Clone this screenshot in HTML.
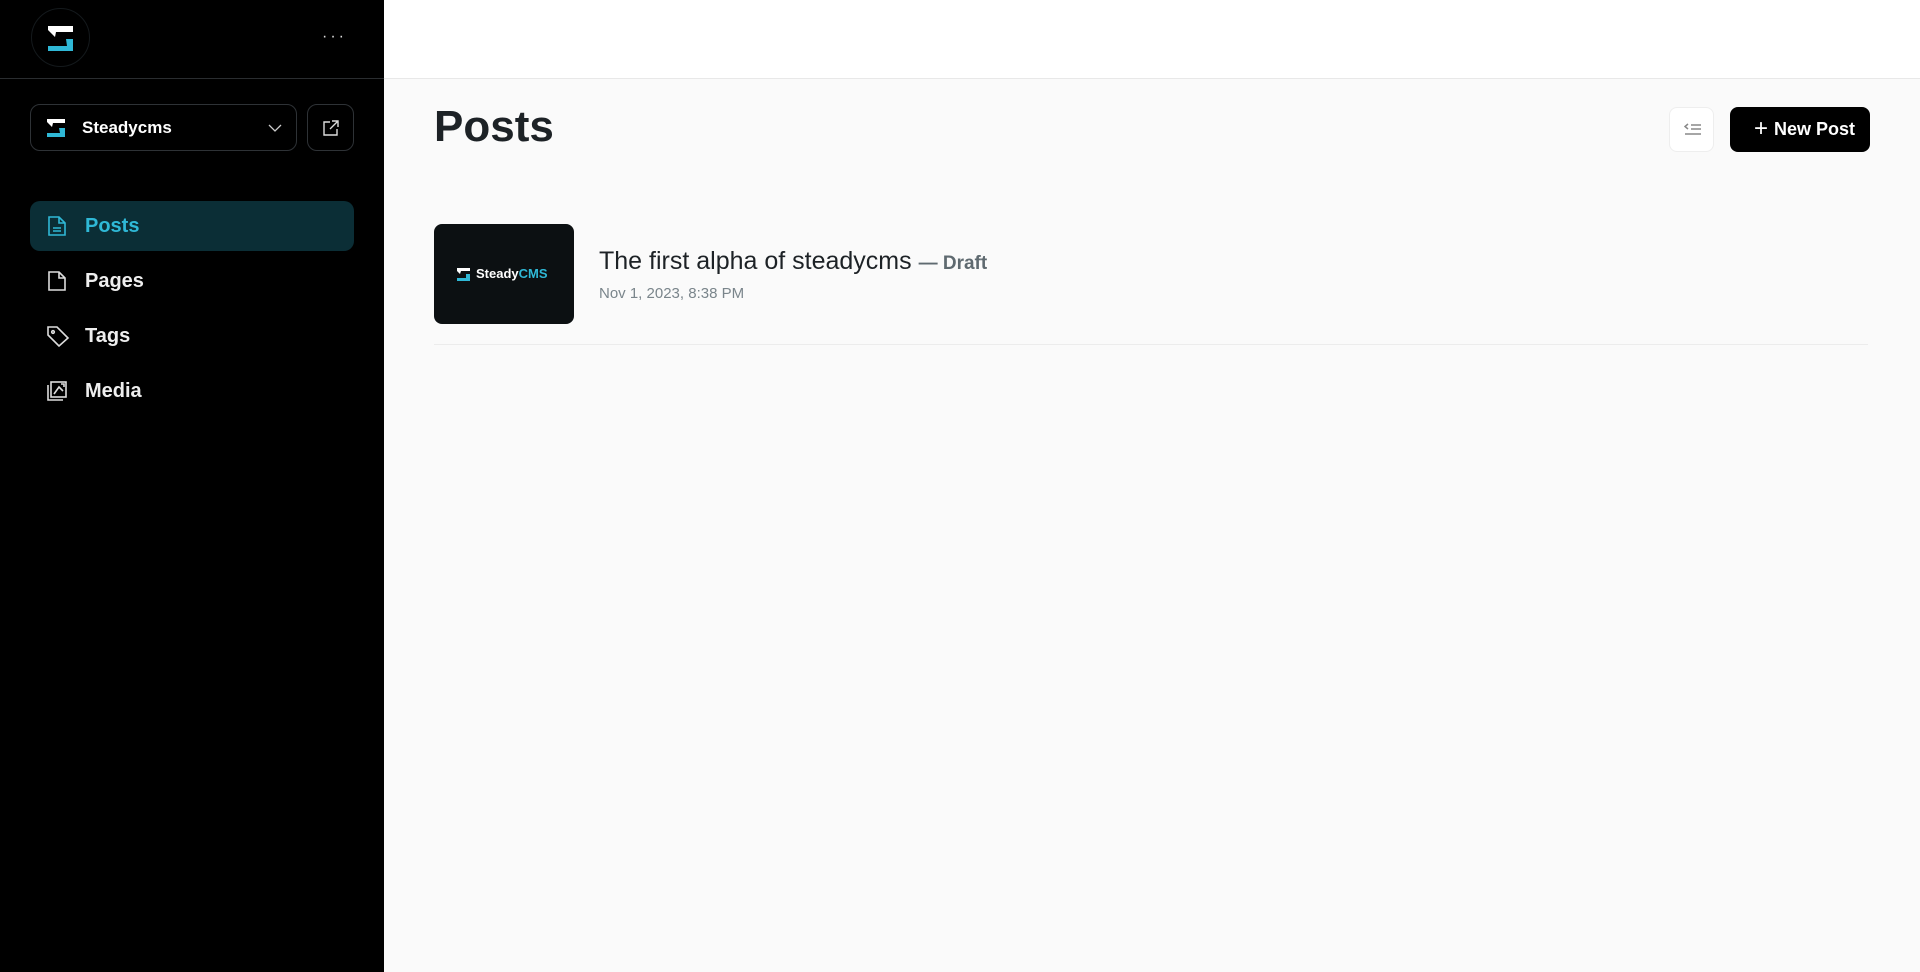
<!DOCTYPE html>
<html><head><meta charset="utf-8"><style>
*{box-sizing:border-box;margin:0;padding:0}
body{width:1920px;height:972px;overflow:hidden;font-family:"Liberation Sans",Roboto,sans-serif;background:#fafafa;position:relative}
.side{position:absolute;left:0;top:0;width:384px;height:972px;background:#000}
.hdr{position:absolute;left:0;top:0;width:384px;height:79px;border-bottom:1px solid #2a2d30}
.circle{position:absolute;left:31px;top:8px;width:59px;height:59px;border-radius:50%;border:1px solid #14191c}
.dots{position:absolute;left:322px;top:28px;color:#ddd;font-size:16px;letter-spacing:3px}
.sel{position:absolute;left:30px;top:104px;width:267px;height:47px;border:1px solid #2e3236;border-radius:10px;color:#fff;font-weight:bold;font-size:17px}
.ext{position:absolute;left:307px;top:104px;width:47px;height:47px;border:1px solid #2e3236;border-radius:10px}
.nav{position:absolute;left:30px;width:324px;height:50px;border-radius:10px;color:#eee;font-size:20px;font-weight:bold}
.nav span{position:absolute;left:55px;top:14px}
.nav svg{position:absolute;left:16px;top:14px}
.act{background:#0b2e36;color:#2fb8d6}
.top{position:absolute;left:384px;top:0;right:0;height:79px;background:#fff;border-bottom:1px solid #e8e8e8}
h1{position:absolute;left:434px;top:102px;font-size:44px;color:#1d2226;font-weight:bold}
.thumb{position:absolute;left:434px;top:224px;width:140px;height:100px;background:#0c1012;border-radius:8px}
.title{position:absolute;left:599px;top:247px;font-size:25px;color:#1d2226}
.title b{font-size:19px;color:#5f6a70}
.date{position:absolute;left:599px;top:285px;font-size:15px;color:#7a858b}
.sep{position:absolute;left:434px;top:344px;width:1434px;height:1px;background:#ececec}
.lb{position:absolute;left:1669px;top:107px;width:45px;height:45px;background:#fff;border:1px solid #eee;border-radius:8px}
.np{position:absolute;left:1730px;top:107px;width:140px;height:45px;background:#000;border-radius:8px;color:#fff;font-weight:bold;font-size:18px}
</style></head><body>
<div class="side">
<div class="hdr"><div class="circle"></div>
<svg style="position:absolute;left:0;top:0" width="100" height="70"><path d="M48 26H73V32H56L55 37L48 30Z" fill="#fff"/><path d="M66 39H73V51H48V46H67Z" fill="#2fb8d6"/></svg>
<div class="dots">···</div></div>
<div class="sel"><svg style="position:absolute;left:15px;top:13px" width="22" height="22"><path d="M1 1H19V5H7L6 9L1 4Z" fill="#fff"/><path d="M13 10H19V19H1V15H14Z" fill="#2fb8d6"/></svg><span style="position:absolute;left:51px;top:13px">Steadycms</span><svg style="position:absolute;left:237px;top:19px" width="14" height="9"><path d="M1 1L7 7L13 1" stroke="#ccc" fill="none" stroke-width="1.3"/></svg></div>
<div class="ext"><svg style="position:absolute;left:14px;top:14px" width="18" height="18" fill="none" stroke="#ddd" stroke-width="1.4"><path d="M8 3H2V16H15V10M10 2H16V8M16 2L8 10"/></svg></div>
<div class="nav act" style="top:201px"><svg width="22" height="22" fill="none" stroke="#2fb8d6" stroke-width="1.6"><path d="M3 2H13L19 8V20H3Z M13 2V8H19 M7 13H15 M7 16H15"/></svg><span>Posts</span></div>
<div class="nav" style="top:256px"><svg width="22" height="22" fill="none" stroke="#ddd" stroke-width="1.6"><path d="M3 2H13L19 8V20H3Z M13 2V8H19"/></svg><span>Pages</span></div>
<div class="nav" style="top:311px"><svg width="24" height="22" fill="none" stroke="#ddd" stroke-width="1.6"><path d="M2 2H11L22 13L13 21L2 10Z"/><circle cx="7" cy="7" r="1.3"/></svg><span>Tags</span></div>
<div class="nav" style="top:366px"><svg width="22" height="22" fill="none" stroke="#ddd" stroke-width="1.6"><rect x="5" y="2" width="15" height="15"/><path d="M2 5V20H17 M8 14L13 7L17 11 M15 4H18V7"/></svg><span>Media</span></div>
</div>
<div class="top"></div>
<h1>Posts</h1>
<div class="lb"><svg style="position:absolute;left:14px;top:15px" width="18" height="14" fill="none" stroke="#888" stroke-width="1.5"><path d="M4 1L1 3.5L4 6 M7 2H17 M7 6H17 M1 11H17"/></svg></div>
<div class="np"><span style="position:absolute;left:24px;top:10px;font-weight:normal;font-size:24px;line-height:24px">+</span><span style="position:absolute;left:44px;top:12px">New Post</span></div>
<div class="thumb"><svg style="position:absolute;left:22px;top:43px" width="16" height="15"><path d="M1 1H14V4H5L4 7L1 4Z" fill="#fff"/><path d="M10 7H14V14H1V11H10Z" fill="#2fb8d6"/></svg><span style="position:absolute;left:42px;top:42px;color:#fff;font-size:13px;font-weight:bold">Steady<span style="color:#2fb8d6">CMS</span></span></div>
<div class="title">The first alpha of steadycms <b>— Draft</b></div>
<div class="date">Nov 1, 2023, 8:38 PM</div>
<div class="sep"></div>
</body></html>
